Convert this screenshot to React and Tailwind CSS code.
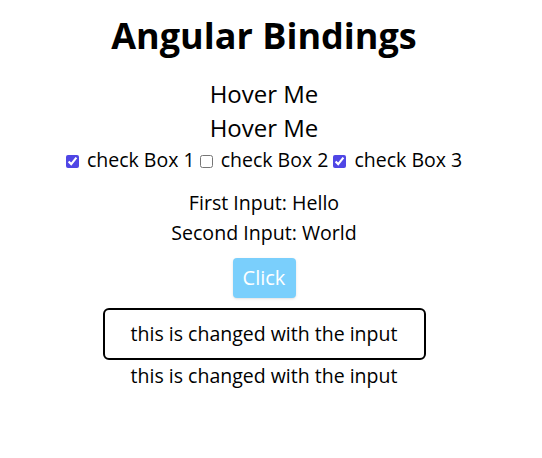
import React, { useState } from 'react';

const Check = ({ checked }) => (
  <input
    type="checkbox"
    defaultChecked={checked}
    className="mr-[3px] align-[-1px] accent-[#4f46e5]"
  />
);

const App = () => {
  const [first] = useState('Hello');
  const [second] = useState('World');
  const [text] = useState('this is changed with the input');

  return (
    <div className="w-[528px] pt-[14px] text-center text-black font-['Open_Sans',sans-serif]">
      <h1 className="text-[36px] font-bold leading-[44px]">Angular Bindings</h1>
      <div className="mt-[19px] text-[24px] leading-[34px]">Hover Me</div>
      <div className="text-[24px] leading-[34px]">Hover Me</div>

      {/* checkboxes */}
      <div className="mt-[3px] text-[19.5px] leading-[24px]">
        <Check checked /> check Box 1 <Check /> check Box 2 <Check checked /> check Box 3
      </div>

      <div className="mt-[16px] text-[19.6px] leading-[30px]">First Input: {first}</div>
      <div className="text-[19.6px] leading-[30px]">Second Input: {second}</div>

      <button className="mt-[10px] h-[40px] w-[63px] rounded bg-[#7acffc] text-[20px] text-white shadow-sm">
        Click
      </button>

      <div className="mx-auto mt-[10px] flex h-[52px] w-[323px] items-center justify-center rounded-md border-2 border-black text-[19.5px]">
        {text}
      </div>
      <div className="text-[19.5px] leading-[32px]">{text}</div>
    </div>
  );
};

export default App;
